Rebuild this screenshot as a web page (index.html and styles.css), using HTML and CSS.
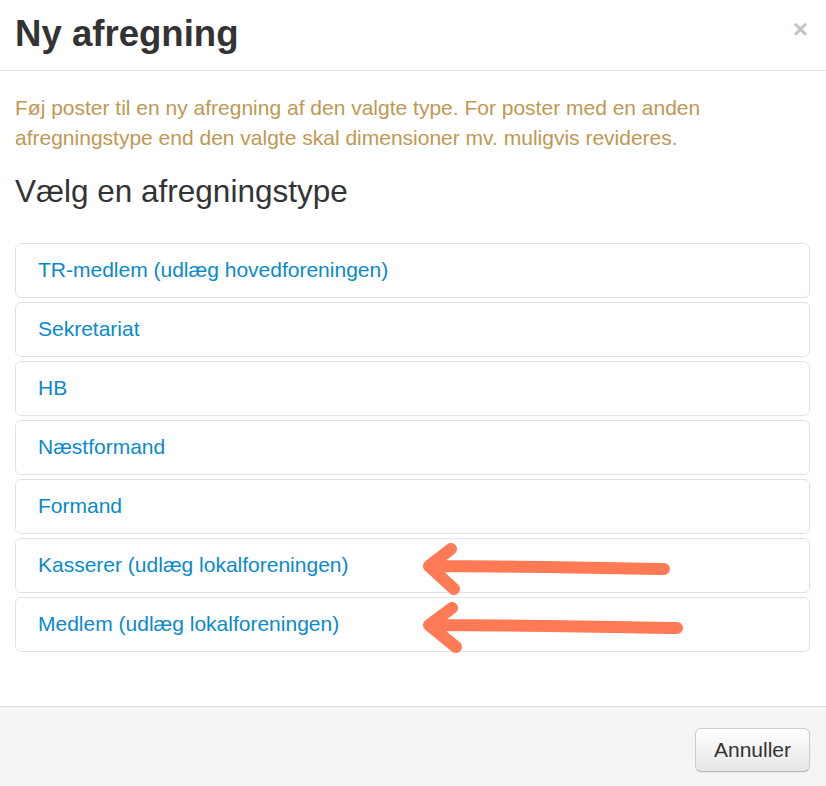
FILE: index.html
```html
<!DOCTYPE html>
<html lang="da">
<head>
	<meta charset="UTF-8">
	<title>Ny afregning</title>
	<link rel="stylesheet" href="styles.css">
</head>
<body>
	<div id="modal">
		<div class="modal-header">
			<h3>Ny afregning</h3>
			<a href="javascript:;" class="close">&times;</a>
		</div>
		<div class="modal-body">
			<p class="hint">Føj poster til en ny afregning af den valgte type. For poster med en anden afregningstype end den valgte skal dimensioner mv. muligvis revideres.</p>
			<h4>Vælg en afregningstype</h4>
			<ul class="types">
				<li><a href="javascript:;">TR-medlem (udlæg hovedforeningen)</a></li>
				<li><a href="javascript:;">Sekretariat</a></li>
				<li><a href="javascript:;">HB</a></li>
				<li><a href="javascript:;">Næstformand</a></li>
				<li><a href="javascript:;">Formand</a></li>
				<li><a href="javascript:;">Kasserer (udlæg lokalforeningen)</a></li>
				<li><a href="javascript:;">Medlem (udlæg lokalforeningen)</a></li>
			</ul>
			<!-- hand drawn arrows over the list -->
			<svg class="arrows" width="826" height="786" viewBox="0 0 826 786">
				<g fill="none" stroke="#ff7a55" stroke-width="12" stroke-linecap="round" stroke-linejoin="round">
					<path d="M664 569 C600 568 500 566 430 566 M451 549 L429 566 L454 589"/>
					<path d="M677 628 C610 627 510 625 430 625 M452 608 L429 625 L456 647"/>
				</g>
			</svg>
		</div>
		<div class="modal-footer">
			<a href="javascript:;" class="btn">Annuller</a>
		</div>
	</div>
</body>
</html>
```

FILE: styles.css
```css
*{
	margin: 0;
	padding: 0;
	box-sizing: border-box;
}
body{
	font-family: "Liberation Sans", Arial, sans-serif;
	background: #fff;
	color: #333;
}
#modal{
	width: 826px;
	height: 786px;
	display: flex;
	flex-direction: column;
	background: #fff;
}
.modal-header{
	height: 71px;
	border-bottom: 1px solid #e5e5e5;
	padding: 0 18px 0 15px;
	display: flex;
	align-items: center;
	justify-content: space-between;
}
.modal-header h3{
	font-size: 36.6px;
	font-weight: bold;
	line-height: 40px;
	color: #333;
	margin-top: -3px;
}
.close{
	font-size: 26px;
	font-weight: bold;
	color: #c4c4c4;
	text-decoration: none;
	line-height: 20px;
	margin-top: -13px;
}
.modal-body{
	flex: 1;
	padding: 22px 16px 0 15px;
	position: relative;
}
.hint{
	font-size: 21px;
	line-height: 30px;
	color: #c09853;
}
h4{
	font-size: 31.5px;
	font-weight: normal;
	line-height: 40px;
	margin-top: 18px;
	color: #333;
}
.types{
	list-style: none;
	margin-top: 32px;
	display: flex;
	flex-direction: column;
	gap: 4px;
}
.types li{
	height: 55px;
	border: 1px solid #e2e2e2;
	border-radius: 6px;
	display: flex;
	align-items: center;
	padding-left: 22px;
}
.types a{
	font-size: 21px;
	color: #0a8acd;
	text-decoration: none;
	margin-top: -1px;
}
.arrows{
	position: absolute;
	left: 0;
	top: -71px;
	pointer-events: none;
}
.modal-footer{
	height: 80px;
	background: #f5f5f5;
	border-top: 1px solid #dddddd;
	display: flex;
	justify-content: flex-end;
	align-items: flex-start;
	padding: 21px 16px 0 0;
}
.btn{
	width: 115px;
	height: 44px;
	border: 1px solid #cccccc;
	border-bottom-color: #b8b8b8;
	border-radius: 6px;
	background: linear-gradient(#ffffff, #e6e6e6);
	box-shadow: inset 0 1px 0 rgba(255,255,255,.2), 0 1px 2px rgba(0,0,0,.05);
	font-size: 21px;
	color: #333;
	text-decoration: none;
	display: flex;
	align-items: center;
	justify-content: center;
}
```
